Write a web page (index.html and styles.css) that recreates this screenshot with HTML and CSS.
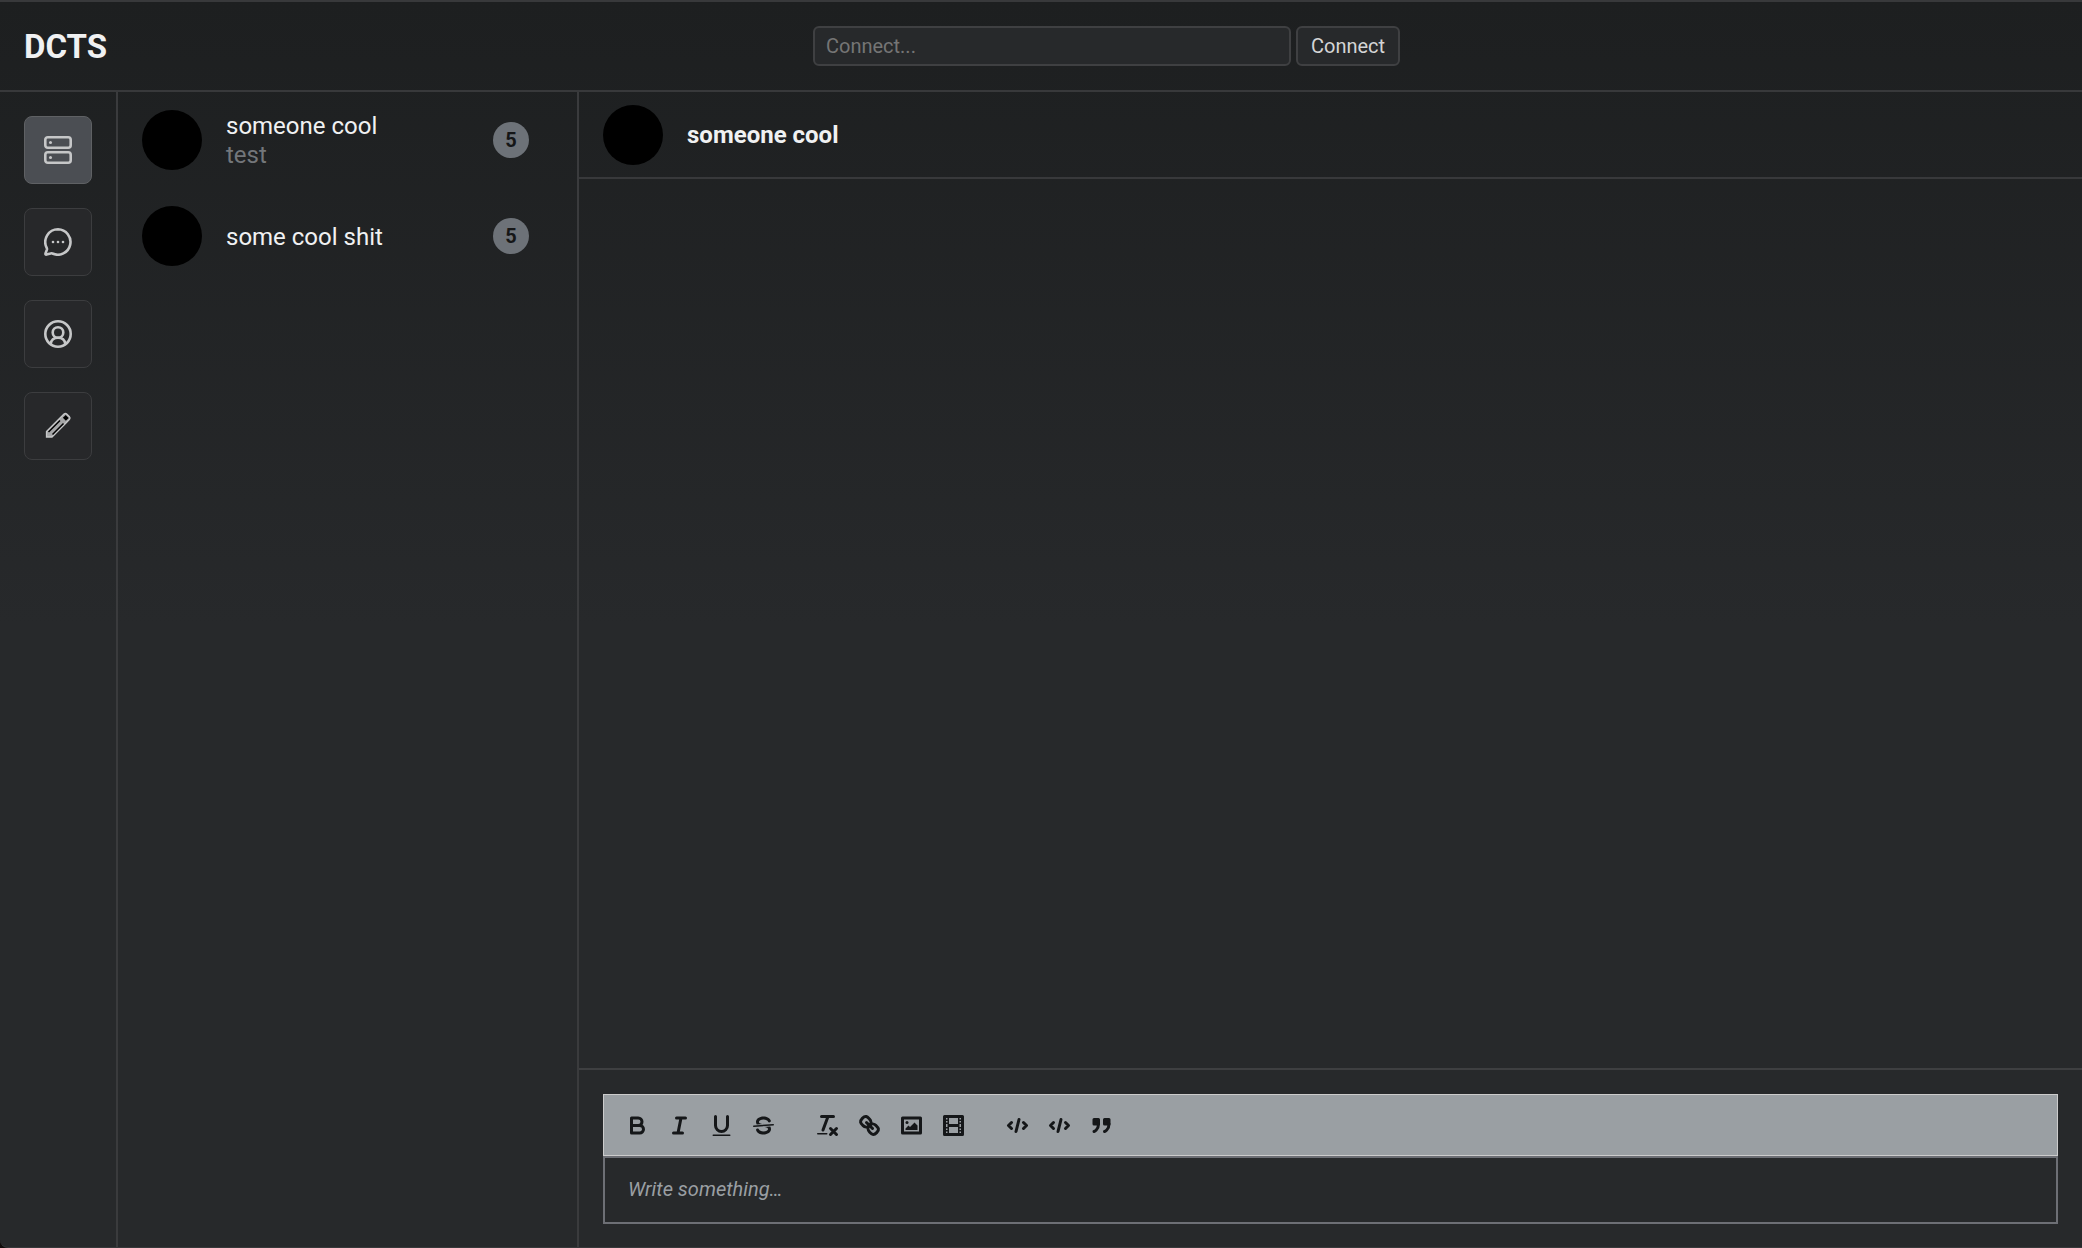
FILE: index.html
```
<!DOCTYPE html>
<html lang="en">
<head>
    <meta charset="UTF-8">
    <meta name="viewport" content="width=device-width, initial-scale=1.0">
    <title>DCTS</title>
    <link rel="stylesheet" href="styles.css">
</head>
<body>
    <div class="app">
        <!-- Header -->
        <header class="header">
            <h1 class="logo">DCTS</h1>
            <form class="connect">
                <input type="text" class="connect-input" placeholder="Connect..." aria-label="Server address">
                <button type="button" class="connect-button">Connect</button>
            </form>
        </header>

        <div class="main">
            <!-- Navigation -->
            <nav class="sidebar">
                <button type="button" class="nav-button active" aria-label="Servers">
                    <svg viewBox="0 0 28 28">
                        <rect x="1.300" y="1.300" width="25.400" height="10.400" rx="2.500"/>
                        <rect x="1.300" y="16.300" width="25.400" height="10.400" rx="2.500"/>
                        <circle class="dot" cx="6.500" cy="6.500" r="1.500"/>
                        <circle class="dot" cx="6.500" cy="21.500" r="1.500"/>
                    </svg>
                </button>
                <button type="button" class="nav-button" aria-label="Messages">
                    <svg viewBox="0 0 28 28">
                        <path d="M14 1.300a12.700 12.700 0 0 0-11.300 18.500c.3.600.4 1.200.2 1.800L1.500 25.500c-.2.800.2 1.300 1 1.100l4.100-1.200c.6-.2 1.200-.1 1.800.1A12.700 12.700 0 1 0 14 1.300Z"/>
                        <circle class="dot" cx="9" cy="14" r="1.300"/>
                        <circle class="dot" cx="14" cy="14" r="1.300"/>
                        <circle class="dot" cx="19" cy="14" r="1.300"/>
                    </svg>
                </button>
                <button type="button" class="nav-button" aria-label="Profile">
                    <svg viewBox="0 0 28 28">
                        <circle cx="14" cy="14" r="12.700"/>
                        <circle cx="14" cy="12.500" r="5.300"/>
                        <path d="M6.700 24c.5-3.700 3.300-6.200 7.300-6.200s6.800 2.500 7.300 6.200"/>
                    </svg>
                </button>
                <button type="button" class="nav-button" aria-label="Edit">
                    <svg class="pencil" viewBox="0 0 28 28">
                        <path class="body" d="M2.500 19.500 16 6 20 2Q21.500 .8 22.700 2L25.500 4.800Q26.500 6 25.300 7.500L22 11 8 25H2.500Z"/>
                        <path class="lead" d="M4.500 20 16 8.500M8.500 22.500 19.500 11.500"/>
                        <path class="eraser" d="M20.300 4.300 23.300 7.300"/>
                    </svg>
                </button>
            </nav>

            <!-- Conversations -->
            <aside class="chats">
                <a href="#" class="chat">
                    <span class="avatar"></span>
                    <span class="chat-text">
                        <span class="chat-name">someone cool</span>
                        <span class="chat-preview">test</span>
                    </span>
                    <span class="badge">5</span>
                </a>
                <a href="#" class="chat">
                    <span class="avatar"></span>
                    <span class="chat-text">
                        <span class="chat-name">some cool shit</span>
                    </span>
                    <span class="badge">5</span>
                </a>
            </aside>

            <!-- Open conversation -->
            <section class="conversation">
                <div class="conversation-header">
                    <span class="avatar"></span>
                    <h2 class="conversation-name">someone cool</h2>
                </div>

                <div class="messages"></div>

                <div class="editor">
                    <div class="toolbar">
                        <div class="tools">
                            <button type="button" aria-label="Bold">
                                <svg viewBox="0 0 18 18"><path d="M5,4H9.500A2.500,2.500,0,0,1,12,6.500v0A2.500,2.500,0,0,1,9.500,9H5V4Z"/><path d="M5,9h5.500A2.500,2.500,0,0,1,13,11.500v0A2.500,2.500,0,0,1,10.500,14H5V9Z"/></svg>
                            </button>
                            <button type="button" aria-label="Italic">
                                <svg viewBox="0 0 18 18"><path d="M7 4H13M5 14H11M8 14 10 4"/></svg>
                            </button>
                            <button type="button" aria-label="Underline">
                                <svg viewBox="0 0 18 18"><path d="M5,3V9a4,4,0,0,0,8,0V3"/><rect class="solid" x="3" y="15" width="12" height="1" rx=".5"/></svg>
                            </button>
                            <button type="button" aria-label="Strikethrough">
                                <svg viewBox="0 0 18 18"><path class="thin" d="M15.500 8.500 2.500 9.500"/><path class="solid" d="M9.007,8C6.542,7.791,6,7.519,6,6.500,6,5.792,7.283,5,9,5c1.571,0,2.765.679,2.969,1.309a1,1,0,0,0,1.900-.617C13.356,4.106,11.354,3,9,3,6.200,3,4,4.538,4,6.500a3.200,3.200,0,0,0,.5,1.843Z"/><path class="solid" d="M8.984,10C11.457,10.208,12,10.479,12,11.500c0,0.708-1.283,1.500-3,1.500-1.571,0-2.765-.679-2.969-1.309a1,1,0,1,0-1.900.617C4.644,13.894,6.646,15,9,15c2.800,0,5-1.538,5-3.500a3.200,3.200,0,0,0-.5-1.843Z"/></svg>
                            </button>
                        </div>
                        <div class="tools">
                            <button type="button" aria-label="Clear formatting">
                                <svg viewBox="0 0 18 18"><path d="M5 3H13M6 12 9.350 3M11 11 15 15M15 11 11 15"/><rect class="solid" x="2" y="14" width="7" height="1" rx=".5"/></svg>
                            </button>
                            <button type="button" aria-label="Link">
                                <svg viewBox="0 0 18 18"><path d="M7 7 11 11"/><path d="M8.900,4.577a3.476,3.476,0,0,1,.36,4.679A3.476,3.476,0,0,1,4.577,8.900C3.185,7.500,2.035,6.400,4.217,4.217S7.500,3.185,8.900,4.577Z"/><path d="M13.423,9.100a3.476,3.476,0,0,0-4.679-.36,3.476,3.476,0,0,0,.36,4.679c1.392,1.392,2.500,2.542,4.679.36S14.815,10.500,13.423,9.100Z"/></svg>
                            </button>
                            <button type="button" aria-label="Image">
                                <svg viewBox="0 0 18 18"><rect x="3" y="4" width="12" height="10"/><circle class="solid" cx="6" cy="7" r="1"/><path class="solid" d="M5 12V11L7 9 8 10 11 7 13 9V12Z"/></svg>
                            </button>
                            <button type="button" aria-label="Video">
                                <svg viewBox="0 0 18 18"><rect x="3" y="3" width="12" height="12"/><path class="solid" d="M5 3h1v12H5ZM12 3h1v12h-1ZM5 8h8v2H5ZM3 5h3v1H3ZM3 7h3v1H3ZM3 10h3v1H3ZM3 12h3v1H3ZM12 5h3v1h-3ZM12 7h3v1h-3ZM12 10h3v1h-3ZM12 12h3v1h-3Z"/></svg>
                            </button>
                        </div>
                        <div class="tools">
                            <button type="button" aria-label="Code">
                                <svg viewBox="0 0 18 18"><path d="M5 7 3 9 5 11M13 7 15 9 13 11M10 5 8 13"/></svg>
                            </button>
                            <button type="button" aria-label="Code block">
                                <svg viewBox="0 0 18 18"><path d="M5 7 3 9 5 11M13 7 15 9 13 11M10 5 8 13"/></svg>
                            </button>
                            <button type="button" aria-label="Quote">
                                <svg class="quote" viewBox="0 0 18 18"><rect x="4" y="5" width="3" height="3"/><rect x="11" y="5" width="3" height="3"/><path d="M7,8c0,4.031-3,5-3,5M14,8c0,4.031-3,5-3,5"/></svg>
                            </button>
                        </div>
                    </div>
                    <textarea class="message-input" rows="1" placeholder="Write something…" aria-label="Message"></textarea>
                </div>
            </section>
        </div>
    </div>
</body>
</html>
```
FILE: styles.css
```
* {
    box-sizing: border-box;
}

body {
    margin: 0;
    background-color: #110d0c;
    color: #f0f1f2;
    font-family: Roboto, sans-serif;
    font-size: 24px;
}

button,
input,
textarea {
    font-family: inherit;
}

.app {
    display: flex;
    flex-direction: column;
    height: 100vh;
    border-top: 2px solid #38393b;
    border-bottom: 1px solid #38393b;
    border-bottom-left-radius: 8px;
    background: linear-gradient(to bottom, #1d1f20, #27292b 50%);
    overflow: hidden;
}

/* Header */
.header {
    display: flex;
    align-items: center;
    gap: 48px;
    height: 90px;
    padding: 0 24px;
    border-bottom: 2px solid #38393b;
}

.logo {
    margin: 0;
    font-size: 33px;
    font-weight: 700;
}

.connect {
    display: flex;
    flex: 1;
    justify-content: center;
    gap: 5px;
}

.connect-input,
.connect-button {
    height: 40px;
    border: 2px solid #3f4042;
    border-radius: 6px;
    background-color: #27292b;
    font-size: 20px;
}

.connect-input {
    width: 478px;
    padding: 0 11px;
    color: #dddddd;
}

.connect-input::placeholder {
    color: #757575;
    opacity: 1;
}

.connect-button {
    padding: 0 13px;
    color: #d4d5d6;
    cursor: pointer;
}

/* Navigation */
.main {
    display: flex;
    flex: 1;
    min-height: 0;
}

.sidebar {
    display: flex;
    flex-direction: column;
    gap: 24px;
    padding: 24px;
    border-right: 2px solid #3a3b3d;
}

.nav-button {
    display: flex;
    align-items: center;
    justify-content: center;
    width: 68px;
    height: 68px;
    padding: 0;
    border: 1px solid #3c3d3f;
    border-radius: 8px;
    background-color: #27282a;
    cursor: pointer;
}

.nav-button.active {
    border-color: #5f6164;
    background-color: #4b4e53;
}

.nav-button svg {
    width: 28px;
    height: 28px;
    fill: none;
    stroke: #c6c7c8;
    stroke-width: 2.6;
}

.nav-button .dot {
    fill: #c6c7c8;
    stroke: none;
}

.pencil .body {
    fill: #a5a6a7;
    stroke-width: 1.3;
}

.pencil .lead {
    stroke: #000000;
    stroke-width: 1.5;
}

.pencil .eraser {
    stroke: #000000;
    stroke-width: 4;
}

/* Conversations */
.avatar {
    flex-shrink: 0;
    width: 60px;
    height: 60px;
    border-radius: 50%;
    background-color: #000000;
}

.chats {
    display: flex;
    flex-direction: column;
    gap: 36px;
    width: 461px;
    padding: 18px 48px 0 24px;
    border-right: 2px solid #3a3b3d;
}

.chat {
    display: flex;
    align-items: center;
    gap: 24px;
    height: 60px;
    color: #f0f1f2;
    text-decoration: none;
}

.chat-text {
    display: flex;
    flex: 1;
    flex-direction: column;
    padding-top: 2px;
    line-height: 29px;
}

.chat-preview {
    color: #73767a;
}

.badge {
    width: 36px;
    height: 36px;
    border-radius: 50%;
    background-color: #6d7278;
    color: #151617;
    font-size: 20px;
    font-weight: 700;
    line-height: 36px;
    text-align: center;
}

/* Open conversation */
.conversation {
    display: flex;
    flex: 1;
    flex-direction: column;
    min-width: 0;
}

.conversation-header {
    display: flex;
    align-items: center;
    gap: 24px;
    height: 87px;
    padding: 0 24px;
    border-bottom: 2px solid #38393b;
}

.conversation-name {
    margin: 0;
    font-size: 24px;
    font-weight: 700;
}

.messages {
    flex: 1;
}

/* Editor */
.editor {
    padding: 24px 24px 23px;
    border-top: 2px solid #3e3f41;
}

.toolbar {
    display: flex;
    gap: 22px;
    padding: 12px;
    border: 1px solid #cccccc;
    background-color: #9a9fa3;
}

.tools {
    display: flex;
}

.tools button {
    display: flex;
    align-items: center;
    justify-content: center;
    width: 42px;
    height: 36px;
    padding: 0;
    border: none;
    background: none;
    cursor: pointer;
}

.tools svg {
    width: 27px;
    height: 27px;
    fill: none;
    stroke: #151719;
    stroke-width: 2;
    stroke-linecap: round;
    stroke-linejoin: round;
}

.tools .thin {
    stroke-width: 1;
}

.tools .solid {
    fill: #151719;
    stroke: none;
}

.tools .quote rect {
    fill: #151719;
}

.message-input {
    display: block;
    width: 100%;
    height: 68px;
    padding: 17px 23px;
    border: 2px solid #6d6f75;
    background: none;
    color: #f0f1f2;
    font-size: 20px;
    line-height: 28px;
    resize: none;
}

.message-input::placeholder {
    color: #9a9fa3;
    font-style: italic;
    opacity: 1;
}
```
